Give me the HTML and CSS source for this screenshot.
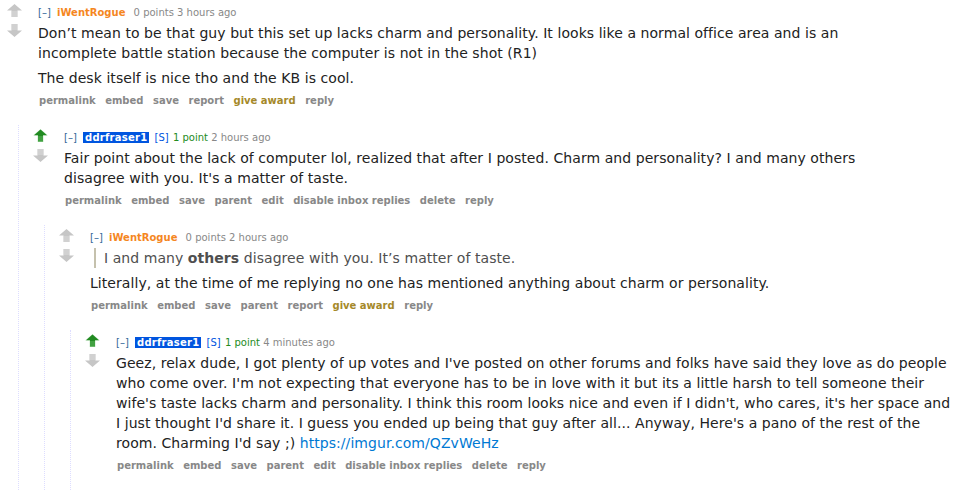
FILE: index.html
```html
<!DOCTYPE html>
<html lang="en">
<head>
<meta charset="utf-8">
<title>Comments</title>
<link rel="stylesheet" href="styles.css">
</head>
<body>
<svg class="defs" width="0" height="0" aria-hidden="true">
  <defs>
    <symbol id="up-gray" viewBox="0 0 15 13">
      <polygon points="7.5,0 15,6.5 10.5,6.5 10.5,13 4.5,13 4.5,6.5 0,6.5" fill="#c6c6c6"/>
      <rect x="4.5" y="7.5" width="6" height="1" fill="#dcdcdc"/>
      <rect x="4.5" y="9.5" width="6" height="1" fill="#dcdcdc"/>
      <rect x="4.5" y="11.5" width="6" height="1" fill="#dcdcdc"/>
    </symbol>
    <symbol id="down-gray" viewBox="0 0 15 13">
      <polygon points="7.5,13 15,6.5 10.5,6.5 10.5,0 4.5,0 4.5,6.5 0,6.5" fill="#c6c6c6"/>
      <rect x="4.5" y="0.5" width="6" height="1" fill="#dcdcdc"/>
      <rect x="4.5" y="2.5" width="6" height="1" fill="#dcdcdc"/>
      <rect x="4.5" y="4.5" width="6" height="1" fill="#dcdcdc"/>
    </symbol>
    <symbol id="up-green" viewBox="0 0 15 13">
      <polygon points="7.5,0 15,6.5 10.5,6.5 10.5,13 4.5,13 4.5,6.5 0,6.5" fill="#cde9cd"/>
      <polygon points="7.5,0.6 14,6.2 10,6.2 10,12.6 5,12.6 5,6.2 1,6.2" fill="#218a21"/>
      <rect x="5" y="7.5" width="5" height="1" fill="#62b862"/>
      <rect x="5" y="9.5" width="5" height="1" fill="#62b862"/>
      <rect x="5" y="11.5" width="5" height="1" fill="#62b862"/>
    </symbol>
  </defs>
</svg>

<div class="thread">
  <div class="comment">
    <div class="row">
      <div class="midcol">
        <svg class="arrow up"><use href="#up-gray"/></svg>
        <svg class="arrow down"><use href="#down-gray"/></svg>
      </div>
      <div class="entry">
        <p class="tagline"><span class="expand">[–]</span> <span class="author">iWentRogue</span> <span class="score">0 points</span> <span class="time">3 hours ago</span></p>
        <div class="md">
          <p>Don’t mean to be that guy but this set up lacks charm and personality. It looks like a normal office area and is an incomplete battle station because the computer is not in the shot (R1)</p>
          <p>The desk itself is nice tho and the KB is cool.</p>
        </div>
        <ul class="buttons">
          <li>permalink</li><li>embed</li><li>save</li><li>report</li><li class="award">give award</li><li>reply</li>
        </ul>
      </div>
    </div>

    <div class="child">
      <div class="comment">
        <div class="row">
          <div class="midcol">
            <svg class="arrow up"><use href="#up-green"/></svg>
            <svg class="arrow down"><use href="#down-gray"/></svg>
          </div>
          <div class="entry">
            <p class="tagline"><span class="expand">[–]</span> <span class="submitter">ddrfraser1</span> <span class="op">[S]</span> <span class="score liked">1 point</span> <span class="time">2 hours ago</span></p>
            <div class="md">
              <p>Fair point about the lack of computer lol, realized that after I posted. Charm and personality? I and many others disagree with you. It's a matter of taste.</p>
            </div>
            <ul class="buttons">
              <li>permalink</li><li>embed</li><li>save</li><li>parent</li><li>edit</li><li>disable inbox replies</li><li>delete</li><li>reply</li>
            </ul>
          </div>
        </div>

        <div class="child">
          <div class="comment">
            <div class="row">
              <div class="midcol">
                <svg class="arrow up"><use href="#up-gray"/></svg>
                <svg class="arrow down"><use href="#down-gray"/></svg>
              </div>
              <div class="entry">
                <p class="tagline"><span class="expand">[–]</span> <span class="author">iWentRogue</span> <span class="score">0 points</span> <span class="time">2 hours ago</span></p>
                <div class="md">
                  <blockquote><p>I and many <strong>others</strong> disagree with you. It’s matter of taste.</p></blockquote>
                  <p>Literally, at the time of me replying no one has mentioned anything about charm or personality.</p>
                </div>
                <ul class="buttons">
                  <li>permalink</li><li>embed</li><li>save</li><li>parent</li><li>report</li><li class="award">give award</li><li>reply</li>
                </ul>
              </div>
            </div>

            <div class="child">
              <div class="comment leaf">
                <div class="row">
                  <div class="midcol">
                    <svg class="arrow up"><use href="#up-green"/></svg>
                    <svg class="arrow down"><use href="#down-gray"/></svg>
                  </div>
                  <div class="entry">
                    <p class="tagline"><span class="expand">[–]</span> <span class="submitter">ddrfraser1</span> <span class="op">[S]</span> <span class="score liked">1 point</span> <span class="time">4 minutes ago</span></p>
                    <div class="md">
                      <p>Geez, relax dude, I got plenty of up votes and I've posted on other forums and folks have said they love as do people who come over. I'm not expecting that everyone has to be in love with it but its a little harsh to tell someone their wife's taste lacks charm and personality. I think this room looks nice and even if I didn't, who cares, it's her space and I just thought I'd share it. I guess you ended up being that guy after all... Anyway, Here's a pano of the rest of the room. Charming I'd say ;) <a href="#">https://imgur.com/QZvWeHz</a></p>
                    </div>
                    <ul class="buttons">
                      <li>permalink</li><li>embed</li><li>save</li><li>parent</li><li>edit</li><li>disable inbox replies</li><li>delete</li><li>reply</li>
                    </ul>
                  </div>
                </div>
              </div>
            </div>
          </div>
        </div>
      </div>
    </div>
  </div>
</div>
</body>
</html>
```

FILE: styles.css
```css
html, body {
  margin: 0;
  padding: 0;
  background: #ffffff;
}

body {
  font-family: "DejaVu Sans", Verdana, sans-serif;
  color: #222222;
  overflow: hidden;
}

.defs {
  position: absolute;
  width: 0;
  height: 0;
}

.thread {
  padding-top: 6px;
}

.row {
  display: flex;
  align-items: flex-start;
}

.midcol {
  width: 15px;
  margin: -2px 16px 0 7px;
  flex: none;
  display: flex;
  flex-direction: column;
}

.arrow {
  display: block;
  width: 15px;
  height: 13px;
}

.arrow.down {
  margin-top: 7px;
}

.entry {
  flex: 1;
  min-width: 0;
}

.tagline {
  margin: 0;
  font-size: 10px;
  line-height: 14px;
  color: #888888;
}

.expand {
  color: #336699;
  margin-right: 3px;
}

.author {
  color: #f5871f;
  font-weight: bold;
  margin-right: 5px;
}

.submitter {
  background: #0055df;
  color: #ffffff;
  font-weight: bold;
  padding: 0 2px;
  letter-spacing: 0.25px;
  margin-right: 2px;
}

.op {
  color: #0055df;
  margin-right: 1px;
}

.score.liked {
  color: #228b22;
}

.md {
  max-width: 840px;
  font-size: 14px;
  line-height: 20px;
  letter-spacing: 0.06px;
  margin-top: 3px;
  margin-bottom: 6px;
  color: #222222;
}

.md p {
  margin: 0;
}

.md p + p {
  margin-top: 5px;
}

.md blockquote + p {
  margin-top: 5px;
}

.md blockquote {
  margin: 0 0 0 4px;
  padding: 0 8px;
  border-left: 2px solid #c5c1ad;
  color: #4f4f4f;
}

.md strong {
  font-weight: bold;
}

.md a {
  color: #0079d3;
  text-decoration: none;
}

.buttons {
  list-style: none;
  margin: 0;
  padding: 0;
  display: flex;
  font-size: 10px;
  line-height: 14px;
  font-weight: bold;
  color: #888888;
}

.buttons li {
  padding: 0 1px;
  margin-right: 7.5px;
}

.buttons li.award {
  color: #a5892a;
}

.child {
  margin-top: 17px;
  margin-left: 18px;
  border-left: 1px dotted #ddddff;
  padding-left: 7px;
}

.child > .comment {
  padding-top: 6px;
}

.comment.leaf {
  padding-bottom: 17px;
}
```
